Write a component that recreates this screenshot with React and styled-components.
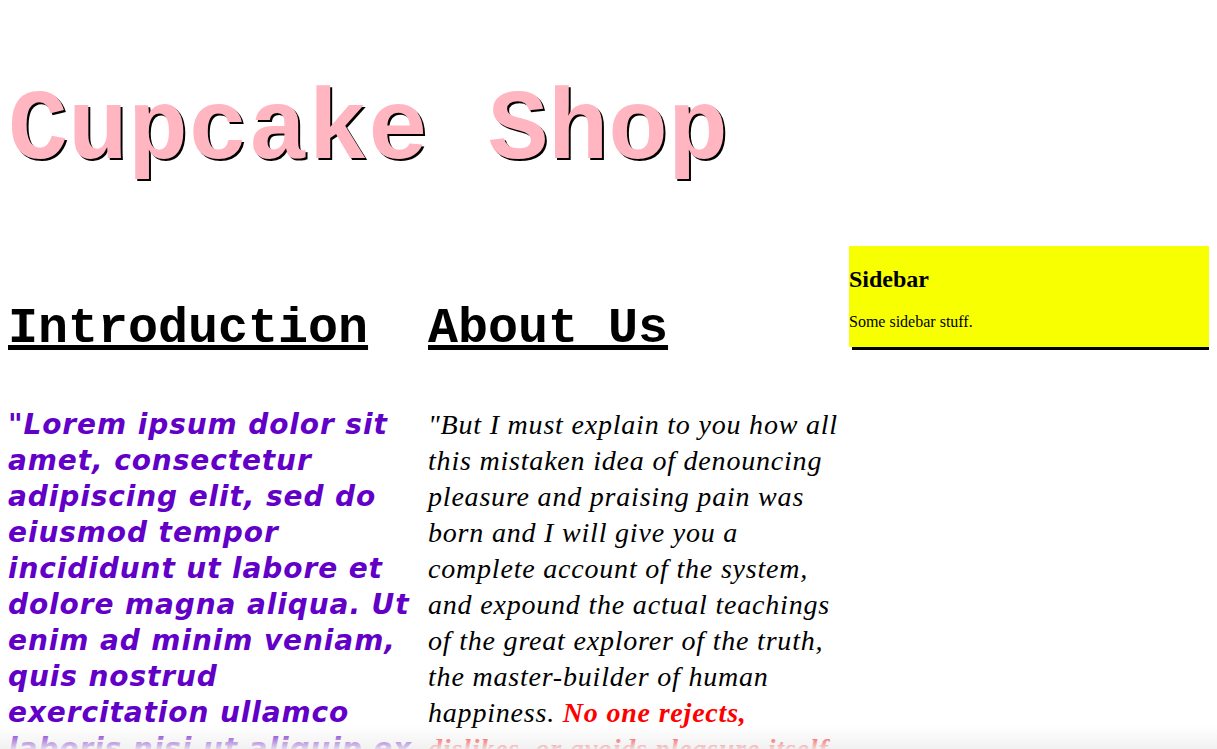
import React from "react";
import styled, { createGlobalStyle } from "styled-components";

const GlobalStyle = createGlobalStyle`
  body {
    margin: 8px;
    background: #fff;
    font-family: "Liberation Serif", "Times New Roman", serif;
    overflow: hidden;
  }
`;

function App() {
  return (
    <>
      <GlobalStyle />
      <Title>Cupcake Shop</Title>
      <Layout>
        <Column>
          <Heading>Introduction</Heading>
          <Intro>
            "Lorem ipsum dolor sit amet, consectetur adipiscing elit, sed do
            eiusmod tempor incididunt ut labore et dolore magna aliqua. Ut enim
            ad minim veniam, quis nostrud exercitation ullamco laboris nisi ut
            aliquip ex ea commodo consequat."
          </Intro>
        </Column>
        <Column>
          <Heading>About Us</Heading>
          <About>
            "But I must explain to you how all this mistaken idea of denouncing
            pleasure and praising pain was born and I will give you a complete
            account of the system, and expound the actual teachings of the
            great explorer of the truth, the master-builder of human happiness.{" "}
            <Highlight>
              No one rejects, dislikes, or avoids pleasure itself, because it is
              pleasure.
            </Highlight>
          </About>
        </Column>
        <Sidebar>
          <h2>Sidebar</h2>
          <p>Some sidebar stuff.</p>
        </Sidebar>
      </Layout>
      <Fade />
    </>
  );
}

export default App;

const Title = styled.h1`
  font-family: "Liberation Mono", "Courier New", monospace;
  font-size: 100px;
  font-weight: 700;
  color: #ffb6c1;
  text-shadow: 2px 2px 0 #000;
  margin: 67px 0 58px;
`;

const Layout = styled.div`
  display: flex;
  align-items: flex-start;
`;

const Column = styled.div`
  width: 35%;
  padding-right: 10px;
  box-sizing: border-box;
`;

const Heading = styled.h2`
  font-family: "Liberation Mono", "Courier New", monospace;
  font-size: 50px;
  font-weight: 700;
  text-decoration: underline;
  margin: 54px 0 50px;
`;

const Intro = styled.p`
  font-family: "DejaVu Sans", Verdana, sans-serif;
  font-style: italic;
  font-weight: 700;
  font-size: 28px;
  letter-spacing: 0.9px;
  line-height: 36px;
  color: #6200c8;
  margin: 0;
`;

const About = styled.p`
  font-family: "Liberation Serif", "Times New Roman", serif;
  font-style: italic;
  font-size: 28px;
  letter-spacing: 0.8px;
  line-height: 36px;
  color: #000;
  margin: 0;
`;

const Highlight = styled.strong`
  color: #ff0000;
`;

const Sidebar = styled.aside`
  width: 30%;
  margin-left: 1px;
  background: #f8ff00;
  box-shadow: 3px 3px 0 #000;

  h2 {
    font-size: 24px;
    margin: 20px 0;
  }
  p {
    font-size: 16px;
    margin: 16px 0;
  }
`;

const Fade = styled.div`
  position: fixed;
  left: 0;
  right: 0;
  bottom: 0;
  height: 24px;
  background: linear-gradient(rgba(255, 255, 255, 0), rgba(240, 240, 240, 0.9));
  pointer-events: none;
`;
